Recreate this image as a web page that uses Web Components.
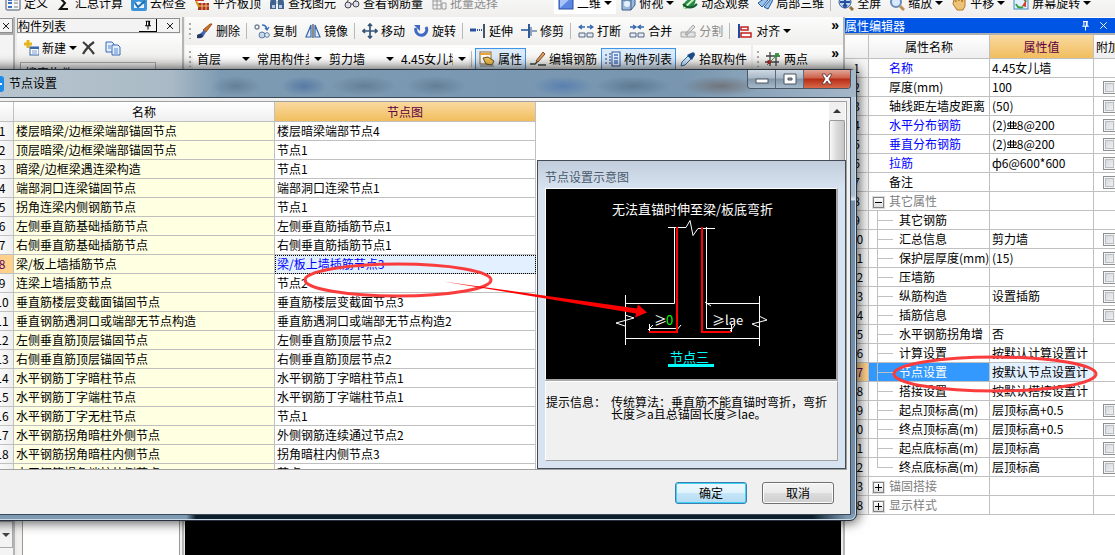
<!DOCTYPE html>
<html lang="zh-CN">
<head>
<meta charset="utf-8">
<title>节点设置</title>
<style>
  html, body { margin: 0; height: 100%; overflow: hidden; }
  body { font: 12px/16px "Noto Sans CJK SC", "Liberation Sans", sans-serif; color: #000; background: #ecebe9; }
</style>
</head>
<body>
<rebar-app></rebar-app>
<script>
const ICONS = {
  define: '<rect x="1" y="1" width="14" height="14" rx="1" fill="#f4f6fa" stroke="#44546e"/><path d="M3 5h4M3 8h4M3 12h4" stroke="#3f6fc0" stroke-width="2"/><path d="M9 5h4M9 8h4M9 12h4" stroke="#777"/>',
  sum: '<path d="M12 3H4l5 5-5 6h8" fill="none" stroke="#111" stroke-width="2"/>',
  cloud: '<rect width="16" height="16" rx="2" fill="#3d93d8"/><path d="M3 9q4-5 10 0v4H3z" fill="#e8f5ff"/><path d="M4 8l3 4 7-6" fill="none" stroke="#1c6fb5" stroke-width="2"/>',
  slab: '<path d="M1 3h9v3H1z" fill="#c33"/><path d="M4 8h11v7H4z" fill="#a5361d"/><path d="M4 11h11M8 8v7M12 8v7" stroke="#f3c07c"/><path d="M2 6l3 6" stroke="#d4961b" stroke-width="2"/>',
  find: '<path d="M2 3h5v11H1V8zM9 3h5l1 5v6H9z" fill="#41638d"/><path d="M7 6h2v3H7zM3 10h3v3H3zM10 10h3v3h-3z" fill="#b9cde6"/>',
  glasses: '<circle cx="4" cy="10" r="3" fill="#dde" stroke="#444"/><circle cx="12" cy="9" r="3" fill="#dde" stroke="#444"/><path d="M7 9h2M3 7l3-5M11 6l3-4" stroke="#444"/>',
  batch: '<path d="M2 2h8v12H2zM2 6h8M2 10h8M6 2v12M11 8h4v6h-4z" fill="none" stroke="#999"/>',
  plane: '<rect x="1" y="1" width="14" height="13" fill="#5b87e0" stroke="#2c4fa8"/><path d="M2 2h12L2 13z" fill="#a8c4fa"/>',
  cube: '<path d="M2 5l4-4h9v9l-4 5H2z" fill="#9db8d8" stroke="#3b6090"/><path d="M2 5h9v10M11 5l4-4" fill="none" stroke="#3b6090"/><circle cx="7" cy="9" r="3" fill="#e4f0fc"/>',
  orbit: '<path d="M1 14q0-9 8-10l5-3q0 11-7 12z" fill="#218b45"/><path d="M1 14L13 3" stroke="#d4f2bf" stroke-width="2"/><path d="M1 9q7 7 14 0" fill="none" stroke="#165b2d" stroke-width="2"/>',
  local: '<path d="M1 8l7-5 3 2-6 7zM7 12l7-8 2 1-5 9z" fill="#99c3ed" stroke="#2a5b99"/>',
  full: '<circle cx="7" cy="7" r="6" fill="#bcd4f1" stroke="#2f5a9a"/><path d="M7 2v10M2 7h10M5 4l2-2 2 2M5 10l2 2 2-2" fill="none" stroke="#254f9b" stroke-width="2"/><path d="M12 12l3 3" stroke="#9c7135" stroke-width="3"/>',
  zoom: '<circle cx="7" cy="7" r="5" fill="#d9eaff" stroke="#6a8cb8" stroke-width="2"/><path d="M11 11l4 4" stroke="#bd9155" stroke-width="3"/>',
  hand: '<path d="M2 9l1-5 2 3V2l2 1 1 3V2l2 1 1 4 1-3 2 1v6l-2 4H6z" fill="#edc275" stroke="#b17826"/>',
  rotview: '<rect x="1" y="1" width="14" height="13" fill="#e0f0ff" stroke="#458ac7"/><path d="M3 9q2 5 7 3M13 7q-2-5-7-3" fill="none" stroke="#35a23b" stroke-width="2"/><path d="M13 5v7l-4-1z" fill="#dc3c27"/>',
  brush: '<path d="M15 1l-6 8-3-2 7-6z" fill="#c7712b" stroke="#a0541a"/><path d="M9 9L7 7 3 11l3 3z" fill="#3c67b8"/><path d="M0 12q3-2 5-1l1 3q-3 2-6 1z" fill="#23395f"/>',
  copy: '<circle cx="3" cy="4" r="2" fill="#fff" stroke="#7a8797" stroke-width="1.5"/><path d="M8 2q4 0 5 4M11 5l2 2 2-3" fill="none" stroke="#3b6fc0" stroke-width="1.3"/><circle cx="8" cy="12" r="3" fill="#c4d6eb" stroke="#5a7ba5"/><circle cx="13" cy="12" r="2.3" fill="#e2ecf7" stroke="#5a7ba5"/>',
  mirror: '<path d="M6 2v12H1zM10 2v12h5z" fill="#e6effb" stroke="#3564aa" stroke-width="1.2"/><path d="M8 1v14" stroke="#222"/>',
  move: '<path d="M8 1v14M1 8h14M6 3l2-2 2 2M6 13l2 2 2-2M3 6L1 8l2 2M13 6l2 2-2 2" fill="none" stroke="#355577" stroke-width="1.7"/>',
  rotate: '<path d="M3 5a5.500 5.500 0 1 0 10-1" fill="none" stroke="#4169c4" stroke-width="3"/><path d="M1 2h6v6z" fill="#4169c4"/>',
  extend: '<path d="M0 7h6" stroke="#2850a0" stroke-width="3"/><path d="M7 7h5" stroke="#2850a0" stroke-width="2" stroke-dasharray="1 1"/><path d="M14 1v14" stroke="#44546a" stroke-width="2"/>',
  trim: '<path d="M0 7h7" stroke="#557aac" stroke-width="2"/><path d="M8 1v14" stroke="#2f5a9a" stroke-width="2"/><path d="M10 4v9M11 8h5" stroke="#6c86a8" stroke-width="1.5"/>',
  split: '<path d="M1 4h6M4 2L1 4l3 2M9 4h6M12 2l3 2-3 2" fill="none" stroke="#3465b0" stroke-width="1.3"/><path d="M1 10h6v4H1zM9 10h6v4H9z" fill="#e7edf6" stroke="#54677e"/>',
  merge: '<path d="M1 4h6M4 2l3 2-3 2M9 4h6M12 2L9 4l3 2" fill="none" stroke="#3465b0" stroke-width="1.3"/><path d="M1 10h6v4H1zM9 10h6v4H9z" fill="#e7edf6" stroke="#54677e"/>',
  divide: '<path d="M1 9h14v5H1zM7 9v5M5 11l8-9 2 2-8 8z" fill="#e2e2e2" stroke="#a4a4a4"/>',
  align: '<path d="M2 1v14" stroke="#1f49a2" stroke-width="2"/><path d="M4 4h7v3H4zM4 10h10v4H4z" fill="#fff" stroke="#c32020" stroke-width="1.5"/>',
  props: '<rect x="1" y="1" width="11" height="12" fill="#fff" stroke="#8a6630"/><path d="M1 2h11v2H1z" fill="#e9a33a"/><path d="M4 7l5-1 6 4-2 4-6-1z" fill="#f2c24e" stroke="#6b5424"/><path d="M1 15h14" stroke="#888"/>',
  editbar: '<path d="M0 13h5l4-4M8 14h8" fill="none" stroke="#3b4a3c" stroke-width="1.5"/><path d="M6 10l7-9 2 2-7 8z" fill="#d3a25c" stroke="#8c4a30"/>',
  list: '<path d="M0 4h3M0 8h3M0 12h3M5 2v12" stroke="#5577aa" stroke-width="1.5" stroke-dasharray="2 1"/><rect x="7" y="1" width="8" height="14" fill="#e8f1ff" stroke="#2f569a"/><path d="M9 4h4M9 7h4M9 10h4M9 12h4" stroke="#4676c2" stroke-width="1.3"/>',
  picker: '<path d="M1 15l1-4 6-6 3 3-6 6z" fill="#cfe6fb" stroke="#33689f"/><path d="M7 4l5 5 1-2 2-3q0-4-4-2L9 3z" fill="#1e4d85"/>',
  twopt: '<path d="M5 1v14M11 2v13M1 5h14M0 11h14" stroke="#444" stroke-width="1.3"/><path d="M2 14L14 2" stroke="#3b9b3b"/><circle cx="4" cy="11" r="2" fill="#b52222"/><circle cx="12" cy="4" r="2" fill="#299c36"/>',
  add: '<path d="M5 0v8M1 4h8" stroke="#e3b51e" stroke-width="3"/><rect x="7" y="7" width="9" height="8" fill="#fff" stroke="#3a66aa"/><path d="M7 8h9" stroke="#3a66aa" stroke-width="2"/><path d="M9 11h5M9 13h5" stroke="#7a9cd0"/>',
  del: '<path d="M2 2q5 4 11 12M13 2Q6 7 2 14" fill="none" stroke="#3c3c3c" stroke-width="2.2"/>',
  pages: '<path d="M1 2h6l2 2v8H1z" fill="#e4effd" stroke="#3b6bb4"/><path d="M7 5h6l2 2v8H7z" fill="#e4effd" stroke="#3b6bb4"/><path d="M3 6h3M3 8h3M9 9h4M9 11h4M9 13h4" stroke="#5b8bd0"/>',
  pin: '<path d="M5 3h6M6 3v6M9 3v6M10 3v6M4 9h8M8 9v5" fill="none" stroke="currentColor" stroke-width="1.3"/>',
  close: '<path d="M4 4l8 8M12 4l-8 8" stroke="currentColor" stroke-width="1.2"/>',
};

function define(name, markup, setup) {
  const template = document.createElement('template');
  template.innerHTML = markup;
  customElements.define(name, class extends HTMLElement {
    constructor() {
      super();
      this.attachShadow({ mode: 'open' }).append(template.content.cloneNode(true));
    }
    connectedCallback() {
      if (setup && !this.ready) { this.ready = true; setup(this, this.shadowRoot); }
    }
  });
}

define('ui-icon', `
<style>:host{display:block;width:16px;height:16px;flex:none} svg{display:block;width:100%;height:100%}</style>
<svg viewBox="0 0 16 16" aria-hidden="true"></svg>`,
(el, root) => { root.querySelector('svg').innerHTML = ICONS[el.getAttribute('name')] || ''; });

/* Toolbar command: icon, label and an optional drop-down arrow */
define('tool-item', `
<style>
  :host{display:block;flex:none}
  button{display:flex;align-items:center;gap:3px;height:22px;padding:0 4px;margin:0;border:0;background:none;font:inherit;color:inherit;white-space:nowrap}
  :host([disabled]) button{color:#8d8d8d}
  :host([pressed]) button{padding:0 3px;border:1px solid #3e94e6;background:#dcebfa}
  i{display:none;border:4px solid transparent;border-top-color:#000;border-bottom:0}
  :host([menu]) i{display:block}
  :host([boxed]) button{background:#fff}
</style>
<button type="button"><slot></slot><i></i></button>`,
(el, root) => {
  const icon = document.createElement('ui-icon');
  icon.setAttribute('name', el.getAttribute('icon'));
  const button = root.querySelector('button');
  button.prepend(icon);
  button.disabled = el.hasAttribute('disabled');
});

define('tool-sep', `<style>:host{display:block;flex:none;width:1px;height:16px;margin:0 3px 0 2px;background:#b9b9b9}</style>`);
define('tool-grip', `<style>:host{display:block;flex:none;width:2px;height:16px;margin:0 2px 0 4px;background:repeating-linear-gradient(#aaa 0 2px,transparent 2px 5px)}</style>`);

define('tool-select', `
<style>
  :host{display:block;flex:none;position:relative;width:72px}
  :host([short]){width:60px}
  select{appearance:none;display:block;width:100%;height:22px;padding:0 16px 0 4px;border:0;border-radius:0;background:#fff;font:inherit;color:#000;text-overflow:clip}
  i{position:absolute;right:3px;top:9px;border:4px solid transparent;border-top-color:#000;border-bottom:0;pointer-events:none}
</style>
<select><option></option></select><i></i>`,
(el, root) => {
  root.querySelector('select').setAttribute('aria-label', el.getAttribute('label'));
  root.querySelector('option').textContent = el.getAttribute('value');
});

define('tool-bar', `
<style>
  :host{display:flex;align-items:center;height:28px;min-width:0;overflow:hidden;background:linear-gradient(#fcfcfc,#efeeed);white-space:nowrap}
  .more{margin-left:auto;padding:0 4px;height:16px;align-self:flex-start;border:0;background:none;font:bold 14px/16px "Liberation Sans",sans-serif;display:none}
  :host([overflow]) .more{display:block}
</style>
<slot></slot><button class="more" type="button" aria-label="更多">»</button>`);

define('component-panel', `
<style>
  :host{display:flex;flex-direction:column;min-width:0;border-right:2px solid #b5b5b5;background:#f1f0ef}
  header{display:flex;align-items:center;height:13px;margin:1px 2px 1px 0;border:1px solid #8f8f8f;background:#f3f3f3}
  h2{margin:0;font:inherit;flex:1;white-space:nowrap}
  header button{width:18px;height:13px;padding:0;border:0;background:none;display:grid;place-items:center;margin-left:4px}
  header button ui-icon{width:12px;height:12px}
  header button:first-of-type{border-right:1px solid #000;border-bottom:1px solid #000}
  .bar{display:flex;align-items:center;height:28px;padding-left:2px;background:linear-gradient(#fdfdfd,#eeedec)}
  .bar ui-icon:last-child{margin-left:8px}
  input{box-sizing:border-box;width:136px;height:20px;margin:0 3px;padding:0 4px;border:1px solid #aaa;font:inherit;background:#f6f6f6}
  .list{flex:1;margin:4px 2px 0 5px;border:1px solid #999;border-bottom:0;background:#fff}
</style>
<header><h2>构件列表</h2><button aria-label="固定"><ui-icon name="pin"></ui-icon></button><button aria-label="关闭"><ui-icon name="close"></ui-icon></button></header>
<div class="bar"><tool-item icon="add" menu>新建</tool-item><ui-icon name="del"></ui-icon><ui-icon name="pages"></ui-icon></div>
<input aria-label="搜索构件" value="搜索构件...">
<div class="list"></div>`);

define('dock-strip', `
<style>
  :host{display:flex;flex-direction:column;border-right:2px solid #b5b5b5;margin-right:2px;background:#f4f4f4}
  button{height:15px;margin-top:1px;padding:0;border:1px solid #8f8f8f;border-left:0;background:#f3f3f3;display:grid;place-items:center;width:13px}
  button ui-icon{width:12px;height:12px}
  span{flex:1;border-top:2px solid #aaa}
  .drop{height:27px;margin-bottom:7px;border:1px solid #aaa;border-left:0}
  i{border:4px solid transparent;border-top-color:#444;border-bottom:0}
</style>
<button aria-label="关闭面板"><ui-icon name="close"></ui-icon></button><span></span><button class="drop" aria-label="展开"><i></i></button>`);

/* Property editor: [number, name, value, kind]; kinds: b blue name, g group, s sub row, x no tick box */
const PROPS = [
  ['1','名称','4.45女儿墙','bx'],['2','厚度(mm)','100',''],['3','轴线距左墙皮距离','(50)',''],
  ['4','水平分布钢筋','(2)#8@200','b'],['5','垂直分布钢筋','(2)#8@200','b'],['6','拉筋','ф6@600*600','b'],
  ['7','备注','',''],['8','其它属性','','gx-'],['9','其它钢筋','','sx'],['10','汇总信息','剪力墙','s'],
  ['11','保护层厚度(mm)','(15)','s'],['12','压墙筋','','s'],['13','纵筋构造','设置插筋','s'],['14','插筋信息','','s'],
  ['15','水平钢筋拐角增','否','sx'],['16','计算设置','按默认计算设置计','sx'],['17','节点设置','按默认节点设置计','sxc'],
  ['18','搭接设置','按默认搭接设置计','sx'],['19','起点顶标高(m)','层顶标高+0.5','s'],['20','终点顶标高(m)','层顶标高+0.5','s'],
  ['21','起点底标高(m)','层顶标高','s'],['22','终点底标高(m)','层顶标高','se'],['23','锚固搭接','','gx+'],['38','显示样式','','gx+'],
];
const REBAR = '<svg width="10" height="10" viewBox="0 0 10 10" role="img" aria-label="Φ"><path d="M1 3h8v3H1zM3.500 1v8M6.500 1v8M0 8.500h10" fill="none" stroke="#000"/></svg>';

define('property-editor', `
<style>
  :host{display:block;position:relative;overflow:hidden;background:#fff;border-left:2px solid #b5b5b5}
  header{display:flex;align-items:center;height:15px;margin-top:1px;background:#0055e5;color:#fff}
  h2{flex:1;margin:0;font:inherit}
  header ui-icon{width:13px;height:13px;margin-right:5px}
  table{table-layout:fixed;border-collapse:separate;border-spacing:0;width:290px;border-top:2px solid #b0b0b0}
  th,td{box-sizing:border-box;height:19px;padding:0 0 0 2px;border:solid #c0c0c0;border-width:0 1px 1px 0;line-height:16px;white-space:nowrap;overflow:hidden;text-align:left;font-weight:400}
  thead th{height:24px;text-align:center;padding:0;background:linear-gradient(#fff,#eee)}
  thead .val{background:linear-gradient(#f9d9a0,#f1be5e);color:#600040}
  tbody th{text-align:center;padding:0;background:#f4f4f4}
  td.name{padding-left:20px}
  .b .name{color:#00f}
  .g .name{color:#808080;padding-left:4px}
  .g .name button{width:11px;height:11px;margin:0 5px 0 0;padding:0;border:1px solid #808080;outline:1px solid #ddd;background:linear-gradient(#fff,#ddd);vertical-align:-1px;position:relative}
  .g button::before,.plus button::after{content:"";position:absolute;left:1px;top:4px;width:7px;height:1px;background:#000}
  .plus button::after{transform:rotate(90deg)}
  .s .name{padding-left:30px;background:linear-gradient(#c0c0c0,#c0c0c0) 8px 0/1px 100% no-repeat,linear-gradient(#c0c0c0,#c0c0c0) 8px 9px/16px 1px no-repeat}
  .e .name{background-size:1px 9px,16px 1px}
  .c .name{background-color:#3399ff;color:#fff}
  .c th{background:#ffd08a;color:#600060}
  .c .value{background:#e2f0ff}
  .tick{padding-left:9px}
  thead .tick{text-align:left;padding-left:2px}
  input{appearance:none;display:block;box-sizing:border-box;width:13px;height:13px;margin:0;border:1px solid #8e8f8f;background:linear-gradient(135deg,#cfd3d8,#f6f6f6);outline:0;box-shadow:inset 0 0 0 1px #f4f4f4,inset 0 0 0 2px #b9bec5}
  .mark{position:absolute;left:47px;top:337px;width:210px;height:42px;pointer-events:none}
</style>
<header><h2>属性编辑器</h2><ui-icon name="pin"></ui-icon><ui-icon name="close"></ui-icon></header>
<table>
  <colgroup><col style="width:24px"><col style="width:121px"><col style="width:104px"><col></colgroup>
  <thead><tr><th></th><th>属性名称</th><th class="val">属性值</th><th class="tick">附加</th></tr></thead>
  <tbody></tbody>
</table>
<svg class="mark" viewBox="0 0 210 42"><ellipse cx="103" cy="20" rx="101" ry="17" fill="none" stroke="#fa3c3c" stroke-width="3"/></svg>`,
(el, root) => {
  root.querySelector('tbody').innerHTML = PROPS.map(([n, name, value, k]) => {
    const cls = [...k].filter(c => /[bgsec]/.test(c)).join(' ') + (k.includes('+') ? ' plus' : '');
    const toggle = k.includes('g') ? `<button aria-label="${name}"></button>` : '';
    const tick = k.includes('x') ? '' : `<input type="checkbox" aria-label="${name}">`;
    return `<tr class="${cls}"><th>${n}</th><td class="name">${toggle}${name}</td><td class="value">${value.replace('#', REBAR)}</td><td class="tick">${tick}</td></tr>`;
  }).join('');
});

/* Drawing of the anchorage detail */
define('node-diagram', `
<style>
  :host{display:block;background:#000}
  svg{display:block;width:100%;height:100%;font:13px "Noto Sans CJK SC",sans-serif}
</style>
<svg viewBox="546 189 290 190" role="img" aria-label="节点三">
  <g fill="none" stroke="#fff" stroke-width="1">
    <path d="M668 227.500h18l4-7 3 15 5-7h17M674.500 227v76.500H626M706.500 227v101.500H732M706.500 303.500H760M625.500 295v50M759.500 296v50M625 338.500h135"/>
    <path d="M625 315l9 3-18 5 9 3M759 316l8 4-15 4 7 3M649.500 324v8M648 330l5-5M649 328.500h29M676 331l5-6M731.500 324v8M730 331l5-6M705 302l6 4"/>
  </g>
  <g fill="none" stroke="#f00" stroke-width="2"><path d="M677 227v105h-28M702 227v105h29"/></g>
  <text x="612" y="214" fill="#fff">无法直锚时伸至梁/板底弯折</text>
  <text x="654" y="325" fill="#fff">≥</text><text x="666" y="325" fill="#0f0">0</text>
  <text x="712" y="325" fill="#fff">≥lae</text>
  <text x="670" y="362" fill="#0ff">节点三</text>
  <path d="M668 365.500h46" stroke="#0ff" stroke-width="3"/>
</svg>`);

const NODES = [
  ['楼层暗梁/边框梁端部锚固节点','楼层暗梁端部节点4'],['顶层暗梁/边框梁端部锚固节点','节点1'],['暗梁/边框梁遇连梁构造','节点1'],
  ['端部洞口连梁锚固节点','端部洞口连梁节点1'],['拐角连梁内侧钢筋节点','节点1'],['左侧垂直筋基础插筋节点','左侧垂直筋插筋节点1'],
  ['右侧垂直筋基础插筋节点','右侧垂直筋插筋节点1'],['梁/板上墙插筋节点','梁/板上墙插筋节点3'],['连梁上墙插筋节点','节点2'],
  ['垂直筋楼层变截面锚固节点','垂直筋楼层变截面节点3'],['垂直钢筋遇洞口或端部无节点构造','垂直筋遇洞口或端部无节点构造2'],
  ['左侧垂直筋顶层锚固节点','左侧垂直筋顶层节点2'],['右侧垂直筋顶层锚固节点','右侧垂直筋顶层节点2'],
  ['水平钢筋丁字暗柱节点','水平钢筋丁字暗柱节点1'],['水平钢筋丁字端柱节点','水平钢筋丁字端柱节点1'],['水平钢筋丁字无柱节点','节点1'],
  ['水平钢筋拐角暗柱外侧节点','外侧钢筋连续通过节点2'],['水平钢筋拐角暗柱内侧节点','拐角暗柱内侧节点3'],['水平钢筋拐角端柱外侧节点','节点3'],
];

define('node-table', `
<style>
  :host{display:block;overflow:hidden}
  table{table-layout:fixed;border-collapse:separate;border-spacing:0;width:100%}
  th,td{box-sizing:border-box;height:19px;padding:0 2px;border:solid #c0c0c0;border-width:0 1px 1px 0;line-height:16px;white-space:nowrap;text-align:left;font-weight:400}
  thead th{height:20px;text-align:center;background:linear-gradient(#fff,#efefef)}
  thead th:last-child{background:linear-gradient(#f9d9a0,#f1be5e);color:#600040}
  tbody th{text-align:center;padding:0;background:linear-gradient(90deg,#fff,#efefef)}
  td:nth-child(2){background:#ffffe1}
  .cur th{background:#ffd08a;color:#600060}
  .cur td:last-child{background:#e2f0ff;color:#00f;outline:1px dotted #000;outline-offset:-1px}
</style>
<table>
  <colgroup><col style="width:23px"><col><col></colgroup>
  <thead><tr><th></th><th>名称</th><th>节点图</th></tr></thead>
  <tbody></tbody>
</table>`,
(el, root) => {
  root.querySelector('tbody').innerHTML = NODES.map(([a, b], i) =>
    `<tr${i === 7 ? ' class="cur"' : ''}><th>${i + 1}</th><td>${a}</td><td>${b}</td></tr>`).join('');
});

define('diagram-panel', `
<style>
  :host{display:flex;flex-direction:column;box-sizing:border-box;border:1px solid #454b54;padding:0 7px 7px;background:linear-gradient(#c1cddb,#d8e3f1 28px)}
  h3{margin:0;font:inherit;color:#4a5a6c;height:27px;line-height:32px}
  node-diagram{height:190px;border:2px solid;border-width:1px 2px 2px 1px;border-color:#fff #a8a8a8 #a8a8a8 #fff}
  dl{display:flex;flex:1;margin:0;padding:14px 2px 0 0;border:1px solid;border-color:#fff #a0a0a0 #a0a0a0 #fff;background:#f0f0f0;line-height:12px}
  dt{flex:none;width:65px} dd{margin:0}
</style>
<h3>节点设置示意图</h3>
<node-diagram></node-diagram>
<dl><dt>提示信息：</dt><dd>传统算法：垂直筋不能直锚时弯折，弯折<br>长度≥a且总锚固长度≥lae。</dd></dl>`);

define('node-dialog', `
<style>
  :host{display:block;box-sizing:border-box;border:1px solid #26323f;border-radius:0 7px 7px 0;padding:0 5px 5px;box-shadow:0 0 12px 2px rgba(0,0,0,.65),inset 0 0 0 1px #c9d9e6;
    background:
      linear-gradient(90deg,transparent 205px,#0c1d2b 215px,#0c1d2b 95%,#7f9bb3 99%) 0 100%/100% 6px no-repeat,
      linear-gradient(#b9cad9,#a9bccd 125px,#dfe8ee 130px,#718da7 131px) 100% 0/6px 100% no-repeat,#7f9bb3}
  .title{display:flex;align-items:flex-start;height:27px;margin:0 -5px;padding:0 5px;position:relative;
    background:
      radial-gradient(closest-side,#3d587066,transparent) 230px 6px/50px 20px no-repeat,
      radial-gradient(closest-side,#2f58927a,transparent) 300px 6px/46px 20px no-repeat,
      radial-gradient(closest-side,#3d587066,transparent) 350px 6px/66px 20px no-repeat,
      radial-gradient(closest-side,#3d587066,transparent) 425px 6px/60px 20px no-repeat,
      radial-gradient(closest-side,#3465b077,transparent) 552px 6px/60px 20px no-repeat,
      radial-gradient(closest-side,#3d587077,transparent) 614px 6px/76px 20px no-repeat,
      radial-gradient(closest-side,#5d473b77,transparent) 700px 6px/80px 20px no-repeat,
      linear-gradient(90deg,#b9c6cf,#a9bac6 190px,#7d9ab3 240px,#7896b0 80%,#a4b7c8)}
  h1{margin:0 auto 0 0;font:inherit;line-height:26px;padding-left:5px}
  .logo{width:16px;height:16px;margin:6px 0 0 2px;border-radius:3px;background:#1d8ce8;display:grid;place-items:center end}
  .logo::after{content:"";width:6px;height:2px;background:#fff;margin-right:2px}
  .win{display:flex;height:18px;border:1px solid #4a5866;border-top:0;border-radius:0 0 4px 4px;overflow:hidden}
  .win button{padding:0;border:0;border-right:1px solid #5c6b7a;width:28px;background:linear-gradient(#cdd8e2,#a9b8c6 45%,#8296a9 50%,#a5b9cb);display:grid;place-items:center}
  .win .x{width:46px;border-right:0;background:linear-gradient(#e2a698,#cd5e48 45%,#b52c14 50%,#d8694a)}
  .win svg{width:14px;height:12px}
  .client{border:1px solid #3b4a58;padding:3px 3px 0;background:#f0f0f0}
  .list{display:flex;height:367px;border:1px solid #a0a0a0;background:#fff;overflow:hidden}
  node-table{flex:1}
  aside{display:flex;flex-direction:column;width:310px;flex:none}
  .scroll{display:flex;justify-content:flex-end;height:58px}
  .scroll div{width:16px;margin-right:1px;background:#f0f0f0;display:flex;flex-direction:column}
  .scroll button{height:18px;padding:0;border:0;background:none;display:grid;place-items:center}
  .scroll i{border:4px solid transparent;border-bottom-color:#333;border-top:0}
  .scroll span{flex:1;border:1px solid #999;border-bottom:0;border-radius:2px 2px 0 0;background:linear-gradient(90deg,#f8f8f8,#dcdcdc 45%,#c6c6c8)}
  diagram-panel{flex:1;margin-left:1px}
  footer{display:flex;justify-content:flex-end;gap:15px;padding:12px 13px 10px}
  footer button{box-sizing:border-box;width:72px;height:22px;padding:0;border:1px solid #707070;border-radius:3px;box-shadow:inset 0 0 0 1px #fcfcfc;background:linear-gradient(#f3f3f3,#ebebeb 50%,#dcdcdc 51%,#cfcfcf);font:inherit}
  footer .ok{border-color:#3c7fb1;box-shadow:inset 0 0 0 1px #3fd0f5;background:linear-gradient(#eef8fe,#e0f2fc 50%,#c6e5f8 51%,#b5dcf3)}
  .mark{position:absolute;right:206px;top:190px;width:350px;height:60px;pointer-events:none}
</style>
<div class="title"><span class="logo"></span><h1>节点设置</h1>
  <div class="win">
    <button aria-label="最小化"><svg viewBox="0 0 14 12"><rect x="1" y="6" width="12" height="4" fill="#fff" stroke="#4a5560"/></svg></button>
    <button aria-label="最大化"><svg viewBox="0 0 14 12"><path d="M1 1h12v10H1zM5 5h4v2H5z" fill="#fff" fill-rule="evenodd" stroke="#4a5560"/></svg></button>
    <button class="x" aria-label="关闭"><svg viewBox="0 0 14 12"><path d="M2 1h3l2 3 2-3h3L9 6l3 5H9L7 8l-2 3H2l3-5z" fill="#fff" stroke="#5a3030" stroke-width=".8"/></svg></button>
  </div>
</div>
<div class="client">
  <div class="list"><node-table></node-table>
    <aside><div class="scroll"><div><button aria-label="向上滚动"><i></i></button><span></span></div></div><diagram-panel></diagram-panel></aside>
  </div>
  <footer><button class="ok">确定</button><button>取消</button></footer>
</div>
<svg class="mark" viewBox="300 260 350 60"><ellipse cx="398" cy="280" rx="93" ry="16" fill="none" stroke="#fa3c3c" stroke-width="3"/><path d="M443 281.500l194 27 1-4 9 8-12 5 1-4z" fill="#f00"/></svg>`);

define('rebar-app', `
<style>
  :host{display:flex;flex-direction:column;position:relative;height:100vh;overflow:hidden}
  .top{height:29px;margin-top:-12px;padding-left:1px;flex:none}
  .body{flex:1;display:grid;grid-template-columns:17px 167px minmax(0,1fr) 272px;min-height:0}
  main{display:flex;flex-direction:column;min-width:0;padding-left:1px}
  .bars{display:flex}
  .bars tool-bar:last-child{flex:1;margin-left:2px}
  .canvas{flex:1;background:#000;margin-right:2px}
  .push{margin-left:52px}
  node-dialog{position:absolute;left:-20px;right:258px;top:69px}
</style>
<tool-bar class="top">
  <tool-item icon="define">定义</tool-item><tool-item icon="sum">汇总计算</tool-item><tool-item icon="cloud">去检查</tool-item><tool-item icon="slab">平齐板顶</tool-item><tool-item icon="find">查找图元</tool-item><tool-item icon="glasses">查看钢筋量</tool-item><tool-item icon="batch" disabled>批量选择</tool-item>
  <tool-item class="push" icon="plane" menu boxed>二维</tool-item><tool-item icon="cube" menu>俯视</tool-item><tool-item icon="orbit">动态观察</tool-item><tool-item icon="local">局部三维</tool-item><tool-sep></tool-sep><tool-item icon="full">全屏</tool-item><tool-item icon="zoom" menu>缩放</tool-item><tool-item icon="hand" menu>平移</tool-item><tool-item icon="rotview" menu>屏幕旋转</tool-item>
</tool-bar>
<div class="body">
  <dock-strip></dock-strip>
  <component-panel></component-panel>
  <main>
    <tool-bar overflow><tool-grip></tool-grip>
      <tool-item icon="brush">删除</tool-item><tool-sep></tool-sep><tool-item icon="copy">复制</tool-item><tool-item icon="mirror">镜像</tool-item><tool-sep></tool-sep><tool-item icon="move">移动</tool-item><tool-item icon="rotate">旋转</tool-item><tool-sep></tool-sep><tool-item icon="extend">延伸</tool-item><tool-item icon="trim">修剪</tool-item><tool-sep></tool-sep><tool-item icon="split">打断</tool-item><tool-item icon="merge">合并</tool-item><tool-item icon="divide" disabled>分割</tool-item><tool-sep></tool-sep><tool-item icon="align" menu>对齐</tool-item>
    </tool-bar>
    <div class="bars">
      <tool-bar><tool-grip></tool-grip>
        <tool-select short label="楼层" value="首层"></tool-select><tool-select label="构件类型" value="常用构件类型"></tool-select><tool-select label="构件" value="剪力墙"></tool-select><tool-select label="构件名称" value="4.45女儿墙"></tool-select><tool-sep></tool-sep><tool-item icon="props" pressed>属性</tool-item><tool-item icon="editbar">编辑钢筋</tool-item><tool-item icon="list" pressed>构件列表</tool-item><tool-item icon="picker">拾取构件</tool-item>
      </tool-bar>
      <tool-bar overflow><tool-grip></tool-grip><tool-item icon="twopt">两点</tool-item></tool-bar>
    </div>
    <div class="canvas"></div>
  </main>
  <property-editor></property-editor>
</div>
<node-dialog></node-dialog>`);
</script>
</body>
</html>
